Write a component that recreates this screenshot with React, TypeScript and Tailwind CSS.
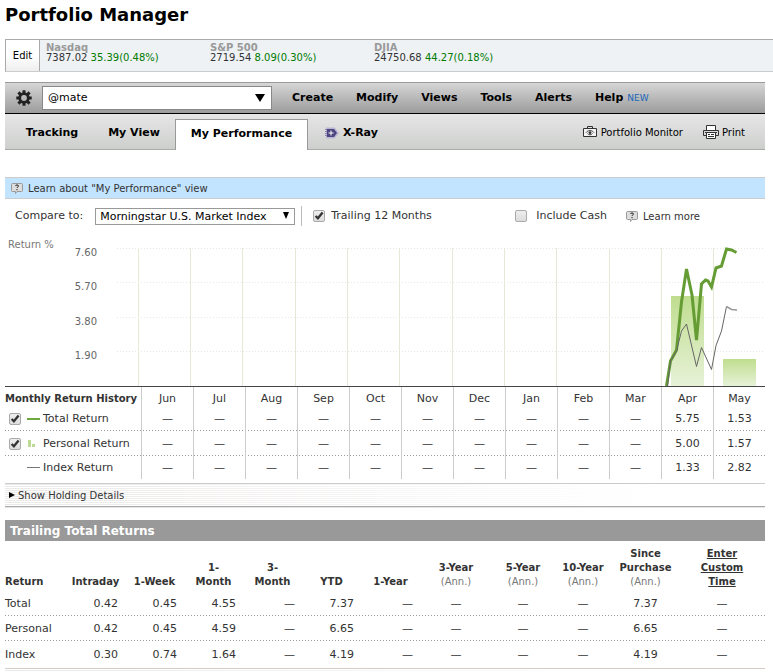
import React from "react";

const DASH = "—";

const quotes = [
  { name: "Nasdaq", price: "7387.02", change: "35.39(0.48%)" },
  { name: "S&P 500", price: "2719.54", change: "8.09(0.30%)" },
  { name: "DJIA", price: "24750.68", change: "44.27(0.18%)" },
];

const menu = ["Create", "Modify", "Views", "Tools", "Alerts", "Help"];
const months = ["Jun", "Jul", "Aug", "Sep", "Oct", "Nov", "Dec", "Jan", "Feb", "Mar", "Apr", "May"];

const monthlyRows = [
  { id: "total", label: "Total Return", checkable: true, values: ["5.75", "1.53"] },
  { id: "personal", label: "Personal Return", checkable: true, values: ["5.00", "1.57"] },
  { id: "index", label: "Index Return", checkable: false, values: ["1.33", "2.82"] },
];

const dotted =
  "bg-[repeating-linear-gradient(90deg,#999_0_1px,transparent_1px_3px)] bg-[length:100%_1px] bg-bottom bg-no-repeat";

const trailingHeads = [
  { top: "", mid: "", name: "Intraday" },
  { top: "", mid: "", name: "1-Week" },
  { top: "", mid: "1-", name: "Month" },
  { top: "", mid: "3-", name: "Month" },
  { top: "", mid: "", name: "YTD" },
  { top: "", mid: "", name: "1-Year" },
  { top: "", mid: "3-Year", name: "(Ann.)" },
  { top: "", mid: "5-Year", name: "(Ann.)" },
  { top: "", mid: "10-Year", name: "(Ann.)" },
  { top: "Since", mid: "Purchase", name: "(Ann.)" },
];

const trailingRows = [
  { label: "Total", v: ["0.42", "0.45", "4.55", DASH, "7.37", DASH, DASH, DASH, DASH, "7.37", DASH] },
  { label: "Personal", v: ["0.42", "0.45", "4.59", DASH, "6.65", DASH, DASH, DASH, DASH, "6.65", DASH] },
  { label: "Index", v: ["0.30", "0.74", "1.64", DASH, "4.19", DASH, DASH, DASH, DASH, "4.19", DASH] },
];

function Gear() {
  return (
    <svg viewBox="0 0 16 16" className="size-4" aria-hidden="true">
      <g stroke="#222" strokeWidth="3">
        <path d="M8 0.3V4M8 12v3.7M0.3 8H4M12 8h3.7" />
        <path d="M2.4 2.4 5 5M11 11l2.600 2.600M2.4 13.6 5 11M11 5l2.600-2.600" />
      </g>
      <circle cx="8" cy="8" r="4.300" fill="none" stroke="#222" strokeWidth="2.800" />
    </svg>
  );
}

function HelpBubble() {
  return (
    <svg viewBox="0 0 12 12" className="size-3 shrink-0" aria-hidden="true">
      <path d="M1.500 1.500h9a1 1 0 0 1 1 1v6a1 1 0 0 1-1 1H6L4.500 11.500V9.500h-3a1 1 0 0 1-1-1v-6a1 1 0 0 1 1-1z" fill="#ddd" stroke="#999" />
      <path d="M4.500 4C4.500 2.600 7.500 2.600 7.500 4 7.500 5 6 4.800 6 6M6 7v1.200" fill="none" stroke="#222" />
    </svg>
  );
}

function XRayIcon() {
  return (
    <svg viewBox="0 0 14 12" className="h-3 w-[14px]" aria-hidden="true">
      <path d="M1 .5h8.500L14 6 9.500 11.500H1z" fill="#b9b5d3" />
      <path d="M2 2h7L12 6 9 10H2z" fill="#4d4580" />
      <path d="M0 2.500h2M0 4.500h2M0 6.500h2M0 8.500h2" stroke="#8984b0" />
      <path d="M6 3.500v5M3.500 6h5" stroke="#fff" />
    </svg>
  );
}

function MonitorIcon() {
  return (
    <svg viewBox="0 0 14 12" className="h-3 w-[14px]" fill="none" stroke="#333" aria-hidden="true">
      <path d="M.5 2.500h13v8H.5z" fill="#f4f4f4" />
      <path d="M4.500 2.500v-2h5v2" />
      <path d="M3 6.700C5 3.900 9 3.900 11 6.700M4.500 7.500C6 9.300 8 9.300 9.500 7.500" strokeWidth=".9" />
      <circle cx="7" cy="6.700" r="1" fill="#333" />
    </svg>
  );
}

function PrinterIcon() {
  return (
    <svg viewBox="0 0 16 14" className="h-[14px] w-4" fill="none" stroke="#333" aria-hidden="true">
      <path d="M3.500 5.500v-5h9v5" fill="#fff" />
      <path d="M3 10.500H.5v-5h15v5H13" />
      <path d="M2 7.500h12" />
      <path d="M3.500 7.500h9v6h-9z" fill="#fff" />
      <path d="M5 9.500h2M8 9.500h3M5 11.500h6" />
    </svg>
  );
}

function Tick({ id, checked, label }: { id: string; checked?: boolean; label?: string }) {
  return (
    <span className="inline-grid size-3 shrink-0 place-items-center">
      <input
        id={id}
        type="checkbox"
        defaultChecked={checked}
        aria-label={label}
        className="peer col-start-1 row-start-1 size-3 appearance-none rounded-xs border border-[#aaa] bg-linear-to-b from-[#eee] to-[#ddd]"
      />
      <svg
        viewBox="0 0 12 12"
        className="pointer-events-none invisible col-start-1 row-start-1 size-3 peer-checked:visible"
        aria-hidden="true"
      >
        <path d="M2.600 6 4.900 8.300 9.600 2.600" fill="none" stroke="#333" strokeWidth="2.300" />
      </svg>
    </span>
  );
}

function Chart() {
  const lines = [138, 190, 242, 295, 347, 399, 452, 504, 556, 609, 661, 713];
  const ticks: [number, string][] = [
    [248, "7.60"],
    [282, "5.70"],
    [317, "3.80"],
    [351, "1.90"],
  ];
  return (
    <svg viewBox="5 236 760 151" className="block w-full" role="img" aria-label="Return % by month">
      <defs>
        <linearGradient id="bar" x1="0" y1="0" x2="0" y2="1">
          <stop offset="0" stopColor="#bfdd8f" />
          <stop offset="1" stopColor="#e7f2d8" />
        </linearGradient>
      </defs>
      {lines.map((x) => (
        <path key={x} d={`M${x + 0.5} 248V386`} stroke="#e8e8d8" />
      ))}
      {ticks.map(([y, label]) => (
        <g key={label}>
          <path d={`M117 ${y + 0.5}H765`} stroke="#e8e8e0" strokeDasharray="1 2" />
          <text x="97" y={y + 8} textAnchor="end" fontSize="10" fill="#666">
            {label}
          </text>
        </g>
      ))}
      <text x="8" y="248" fontSize="10" fill="#777">
        Return %
      </text>
      <rect x="671" y="296" width="33" height="90" fill="url(#bar)" />
      <rect x="723" y="359" width="33" height="27" fill="url(#bar)" />
      <polyline
        points="666.5,386 670.5,361 676.5,350 681.5,302 686.5,269 692,295 696.5,340 701.5,284 705.5,280 708,281 711.5,287 716,268 721.5,266 726.5,249 731.5,250 736.5,252.5"
        fill="none"
        stroke="#659c33"
        strokeWidth="3"
      />
      <polyline
        points="667.5,386 670.5,361 676.5,351 681.5,331 686.5,324 696.5,366.5 701.5,347.5 711.5,369.5 716,345.5 721.5,331 726.5,306.5"
        fill="none"
        stroke="#666"
      />
      <polyline points="726.5,306.5 731.5,309.5 737,310" fill="none" stroke="#999" strokeWidth="1.5" />
      <path d="M5 386.5H765" stroke="#444" />
    </svg>
  );
}

function SeriesMark({ id }: { id: string }) {
  return (
    <svg viewBox="0 0 13 8" className="h-2 w-[13px] shrink-0" aria-hidden="true">
      {id === "total" && <path d="M0 4h13" stroke="#6fa83c" strokeWidth="2" />}
      {id === "personal" && <path d="M1 0h3v7H1zM5 4h3v3H5z" fill="#bcdb92" />}
      {id === "index" && <path d="M0 3.500h13" stroke="#777" />}
    </svg>
  );
}

export default function App() {
  return (
    <div className="min-h-screen overflow-hidden bg-white pl-[5px] font-['DejaVu_Sans',Verdana,sans-serif] text-[11px] text-[#333]">
      <h1 className="h-[39px] pt-1 text-[18px] leading-[22px] font-bold text-black">Portfolio Manager</h1>

      <section className="flex h-[33px] border-y border-l border-t-[#aaa] border-b-[#ccc] border-l-[#aaa] bg-[#eef2f5]">
        <button className="w-[34px] border-r border-[#aaa] bg-linear-to-b from-white from-50% to-[#eee] text-[10px] text-black">
          Edit
        </button>
        <div className="flex pt-[3px] pl-[6px] text-[10px] leading-[10px]">
          {quotes.map((q) => (
            <div key={q.name} className="w-[164px] whitespace-nowrap">
              <div className="font-bold text-[#999]">{q.name}</div>
              <div>
                {q.price} <span className="text-[#007a00]">{q.change}</span>
              </div>
            </div>
          ))}
        </div>
      </section>

      <main className="mr-2">
        <div className="mt-[10px] flex h-8 items-center border-t border-b border-t-[#999] border-b-black bg-linear-to-b from-[#d6d6d6] to-[#9c9c9c] pl-[11px]">
          <button aria-label="Settings">
            <Gear />
          </button>
          <div className="relative ml-[10px] w-[230px]">
            <select
              aria-label="Portfolio"
              className="block h-6 w-full appearance-none border border-[#888] bg-white pt-px pl-[5px] text-[11px] text-black"
            >
              <option>@mate</option>
            </select>
            <svg viewBox="0 0 10 8" className="pointer-events-none absolute top-2 right-[7px] h-2 w-[10px]" aria-hidden="true">
              <path d="M0 0h10L5 8z" />
            </svg>
          </div>
          <div className="flex items-center pt-px">
            <nav className="ml-5 flex gap-[23px] font-bold text-black">
              {menu.map((m) => (
                <button key={m}>{m}</button>
              ))}
            </nav>
            <span className="ml-1 text-[9px] text-[#1a66bb]">NEW</span>
          </div>
        </div>

        <div className="flex h-9 items-center border-b border-[#aaa] bg-linear-to-b from-[#e6e6e6] to-[#cdcfcd] font-bold text-black">
          <button className="w-[94px] pt-[3px]">Tracking</button>
          <button className="w-[70px] pt-[3px]">My View</button>
          <button className="mt-[6px] ml-[6px] h-[31px] w-[133px] border border-b-0 border-[#999] bg-white pb-[2px]">
            My Performance
          </button>
          <button className="ml-[17px] flex items-center gap-1 pt-[3px]">
            <XRayIcon />
            X-Ray
          </button>
          <a href="#monitor" className="ml-auto flex items-center gap-1 pt-px text-[10px] font-normal">
            <MonitorIcon />
            Portfolio Monitor
          </a>
          <a href="#print" className="mr-5 ml-5 flex items-center gap-[3px] pt-px text-[10px] font-normal">
            <PrinterIcon />
            Print
          </a>
        </div>

        <a
          href="#learn"
          className="mt-[27px] flex h-[22px] items-center gap-[5px] border-y border-[#ccc] bg-[#c2e4ff] pl-[6px] text-[10px]"
        >
          <HelpBubble />
          Learn about "My Performance" view
        </a>

        <div className="flex h-[37px] items-center pb-[3px] pl-[10px]">
          <label htmlFor="benchmark">Compare to:</label>
          <div className="relative ml-3 w-[200px]">
            <select
              id="benchmark"
              className="block h-[17px] w-full appearance-none border border-[#999] bg-white pl-1 text-[11px] leading-[15px] text-black"
            >
              <option>Morningstar U.S. Market Index</option>
            </select>
            <svg viewBox="0 0 6 7" className="pointer-events-none absolute top-1 right-[6px] h-[7px] w-[6px]" aria-hidden="true">
              <path d="M0 0h6L3 7z" />
            </svg>
          </div>
          <div className="ml-[6px] h-5 border-l border-[#bbb]" />
          <div className="ml-[11px] flex items-center gap-[6px]">
            <Tick id="trailing" checked />
            <label htmlFor="trailing">Trailing 12 Months</label>
          </div>
          <div className="mr-[19px] ml-auto flex items-center gap-[9px]">
            <Tick id="cash" />
            <label htmlFor="cash">Include Cash</label>
          </div>
          <a href="#more" className="mr-[65px] flex items-center gap-[5px] text-[10px]">
            <HelpBubble />
            Learn more
          </a>
        </div>

        <Chart />

        <table className="w-full table-fixed border-separate border-spacing-0 text-center leading-[14px]">
          <colgroup>
            <col className="w-[136px]" />
            {months.map((m) => (
              <col key={m} />
            ))}
          </colgroup>
          <thead>
            <tr className="h-5">
              <th className="p-0 pt-1 text-left text-[10px] whitespace-nowrap">Monthly Return History</th>
              {months.map((m) => (
                <th key={m} className="border-l border-[#ccc] p-0 pt-1 font-normal">
                  {m}
                </th>
              ))}
            </tr>
          </thead>
          <tbody>
            {monthlyRows.map((r, i) => (
              <tr key={r.id} className={i < 2 ? `${i === 0 ? "h-6" : "h-[25px]"} ${dotted}` : "h-[23px]"}>
                <th className="p-0 pl-1 text-left font-normal">
                  <span className="flex items-center">
                    <span className="flex w-[18px]">
                      {r.checkable && <Tick id={r.id} checked label={r.label} />}
                    </span>
                    <SeriesMark id={r.id} />
                    <label htmlFor={r.checkable ? r.id : undefined} className="ml-[3px] whitespace-nowrap">
                      {r.label}
                    </label>
                  </span>
                </th>
                {months.map((m, k) => (
                  <td key={m} className="border-l border-[#ccc] p-0">
                    {k < 10 ? DASH : r.values[k - 10]}
                  </td>
                ))}
              </tr>
            ))}
          </tbody>
        </table>

        <div className="mt-1 border-b border-[#e5e5e5]">
          <button className="flex h-6 w-full items-center gap-[3px] border-y border-t-[#ccc] border-b-[#aaa] bg-[linear-gradient(90deg,transparent,white_85%),repeating-linear-gradient(#ebe9e8_0_1px,white_1px_2px)] pl-1 text-[10px]">
            <svg viewBox="0 0 6 6" className="size-[6px]" aria-hidden="true">
              <path d="M0 0l6 3-6 3z" />
            </svg>
            Show Holding Details
          </button>
        </div>

        <h2 className="mt-3 h-[21px] bg-[#999] pl-[5px] text-[12px] leading-[22px] font-bold text-white">
          Trailing Total Returns
        </h2>

        <table className="w-full table-fixed border-separate border-spacing-0 border-b border-[#d5ccc8] leading-[14px]">
          <colgroup>
            <col className="w-[61px]" />
            <col className="w-[59px]" />
            <col className="w-[59px]" />
            <col className="w-[59px]" />
            <col className="w-[59px]" />
            <col className="w-[59px]" />
            <col className="w-[59px]" />
            <col className="w-[72px]" />
            <col className="w-[62px]" />
            <col className="w-[58px]" />
            <col className="w-[67px]" />
            <col className="w-[86px]" />
          </colgroup>
          <thead>
            <tr className="h-[50px] align-bottom text-[10px]">
              <th className="p-0 pb-[2px] text-left">Return</th>
              {trailingHeads.map((h, i) => (
                <th key={i} className="p-0 pb-[2px]">
                  {h.top && <div>{h.top}</div>}
                  {h.mid && <div>{h.mid}</div>}
                  <div className={i > 5 ? "font-normal text-[#777]" : ""}>{h.name}</div>
                </th>
              ))}
              <th className="p-0 px-4 pb-[2px]">
                <a href="#custom" className="underline">
                  Enter Custom Time
                </a>
              </th>
            </tr>
          </thead>
          <tbody>
            {trailingRows.map((r, i) => (
              <tr key={r.label} className={i < 2 ? `h-[25px] ${dotted}` : "h-[27px]"}>
                <th className="p-0 text-left font-normal">{r.label}</th>
                {r.v.map((v, k) => (
                  <td key={k} className={k < 6 ? "pr-[7px] text-right" : "text-center"}>
                    {v}
                  </td>
                ))}
              </tr>
            ))}
          </tbody>
        </table>
        <div className="h-[3px] bg-[linear-gradient(90deg,transparent,white_85%),repeating-linear-gradient(white_0_1px,#ebe9e8_1px_2px)]" />
      </main>
    </div>
  );
}
